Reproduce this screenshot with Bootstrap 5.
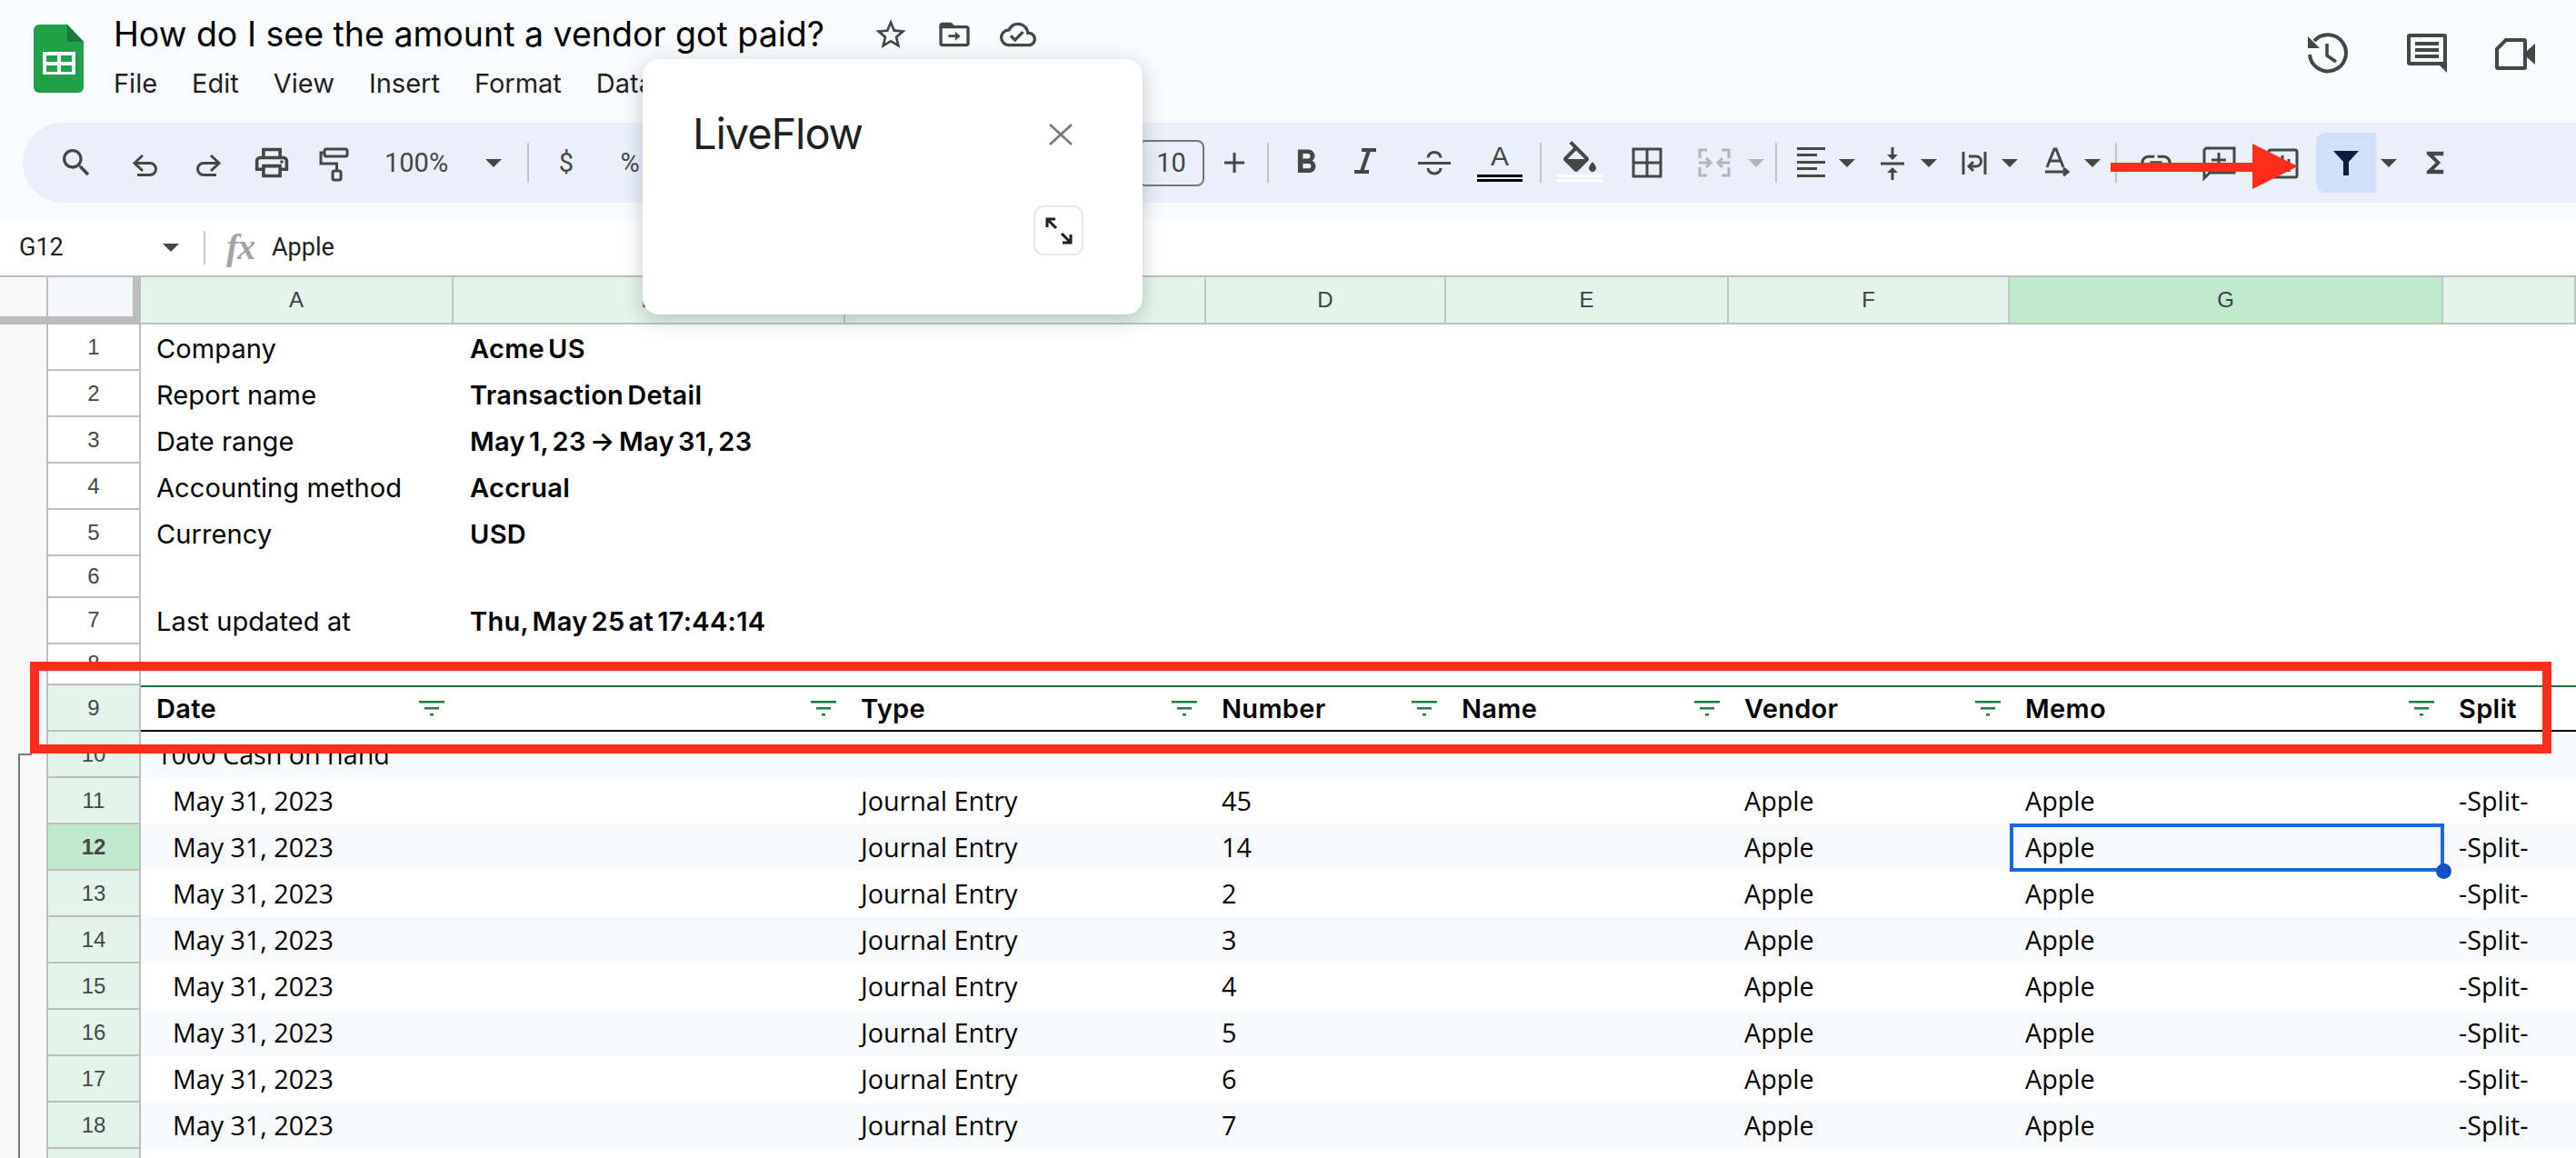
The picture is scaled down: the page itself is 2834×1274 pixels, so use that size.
<!DOCTYPE html>
<html lang="en">
<head>
<meta charset="utf-8">
<title>How do I see the amount a vendor got paid?</title>
<link rel="stylesheet" href="https://cdn.jsdelivr.net/npm/bootstrap@5.3.0/dist/css/bootstrap.min.css">
<style>
html,body{margin:0;background:#fff;}
.app{width:2834px;height:1274px;overflow:hidden;position:relative;font-family:"Liberation Sans",sans-serif;color:#000;}
svg{display:block;overflow:visible;flex:none;}
.topzone{height:241px;background:#f9fbfd;}
.titlebar{height:135px;}
.logo{margin:27px 0 0 37px;width:55px;height:75px;}
.titlecol{margin-left:33px;}
.titlerow{height:76px;}
.doc-title{font-family:Inter,sans-serif;font-size:37.5px;line-height:76px;width:835px;white-space:nowrap;color:#000;}
.menurow{height:32px;gap:38px;font-family:Inter,sans-serif;font-size:29px;line-height:32px;color:#1f1f1f;}
.righticons{position:relative;margin-left:auto;width:295px;padding-top:36px;}
.ttl-ic{width:40px;height:40px;}
.ric{width:44px;height:44px;}
.ric-2{margin-left:65px;}
.ric-3{margin-left:53px;}
.ttl-gap{margin-left:30px;}
.toolbar{height:88px;margin-left:25px;background:#e9f0fa;border-radius:44px 0 0 44px;color:#444746;}
.tic{width:40px;height:40px;flex:none;}
.tdr{width:18px;height:9px;flex:none;}
.tsp{width:2px;height:44px;background:#c0c3c7;flex:none;}
.tzoom{width:78px;font-family:Roboto,sans-serif;font-size:29px;text-align:left;flex:none;line-height:40px;}
.tchar{font-family:Roboto,sans-serif;font-size:29px;text-align:center;line-height:40px;}
.tsize{width:73px;height:51px;border:2px solid #747775;border-radius:8px;font-family:Roboto,sans-serif;font-size:29px;line-height:47px;text-align:center;flex:none;}
.tcolor{position:relative;}
.tletter{font-family:"Liberation Sans",sans-serif;font-size:30px;line-height:30px;text-align:center;color:#444746;margin-top:-2px;}
.bars{position:absolute;left:-5px;top:33px;width:50px;height:8px;border-top:3px solid #000;border-bottom:3px solid #000;}
.bars-w{border-color:#fff;}
.fillic{margin-top:-4px;}
.tfilter{width:66px;height:66px;background:#d0e0fb;border-radius:10px 0 0 10px;flex:none;}
.g5{margin-left:5px}.g10{margin-left:10px}.g11{margin-left:11px}.g12{margin-left:12px}.g13{margin-left:13px}.g16{margin-left:16px}.g17{margin-left:17px}.g21{margin-left:21px}.g22{margin-left:22px}.g23{margin-left:23px}.g24{margin-left:24px}.g25{margin-left:25px}.g28{margin-left:28px}.g29{margin-left:29px}.g30{margin-left:30px}.g32{margin-left:32px}.g33{margin-left:33px}.g34{margin-left:34px}.g36{margin-left:36px}.g39{margin-left:39px}.g539{margin-left:539px}
.formula{height:62px;background:#fff;font-family:Roboto,sans-serif;font-size:27px;color:#1f1f1f;}
.fname{width:158px;margin-left:21px;}
.fcaret{width:18px;height:9px;}
.fsep{width:2px;height:37px;background:#c7c7c7;margin-left:27px;}
.fxmark{font-family:"Liberation Serif",serif;font-style:italic;font-weight:700;font-size:40px;color:#a3a3a3;width:50px;margin-left:23px;letter-spacing:-1px;line-height:40px;}
.sheet-head,.sheet-row{display:grid;grid-template-columns:53px 102px 344px 431px 397px 264px 311px 309px 477px 1fr;}
.sheet-head{height:54px;border-top:2px solid #bdbdbd;}
.corner1{background:#f8f8f8;border-bottom:9px solid #bdbdbd;border-right:2px solid #bdbdbd;}
.corner2{background:#f5f6fa;border-bottom:9px solid #bdbdbd;border-right:9px solid #bdbdbd;}
.colh{background:#e3f5ea;border-right:2px solid #c0c7c2;border-bottom:2px solid #bdc4bf;font-size:24px;color:#3c4043;display:flex;align-items:center;justify-content:center;}
.colh-on{background:#bfebcd;}
.sheet-row{height:51px;}
.short{height:45.5px;}
.gut{background:#f8f8f8;border-right:2px solid #bdbdbd;position:relative;}
.rowh{border-right:2px solid #bdbdbd;border-bottom:2px solid #bdbdbd;font-size:24px;color:#444746;display:flex;align-items:center;justify-content:center;background:#fff;}
.rowh-g{background:#e3f5ea;}
.rowh-on{background:#bfebcd;font-weight:700;}
.zebra{background:#f8f9fa;}
.cellx{display:flex;align-items:center;white-space:nowrap;padding-left:18px;min-width:0;position:relative;}
.meta{font-family:Inter,sans-serif;font-size:29px;letter-spacing:.1px;color:#000;padding-left:17px;padding-top:2px;}
.metab{font-weight:600;padding-left:18px;letter-spacing:.3px;word-spacing:-3.5px;}
.data{font-family:"Open Sans",sans-serif;font-size:28.7px;color:#000;padding-left:17px;padding-bottom:1px;}
.indent{padding-left:35px;}
.hdr-row{background:#fff;}
.hdrc{font-family:Inter,sans-serif;font-weight:600;font-size:29px;letter-spacing:.3px;border-top:2px solid #1e6b3a;border-bottom:2px solid #000;justify-content:space-between;padding-left:17px;padding-right:10px;}
.fl{width:28px;height:18px;}
.gbrack{position:absolute;left:20px;top:0;width:15px;bottom:0;border-left:2px solid #777;}
.gbrack-t{border-top:2px solid #777;top:24px;}
.selbox{position:absolute;left:0;top:-1px;right:-1px;bottom:-1px;border:4px solid #1a66dc;pointer-events:none;}
.handle{position:absolute;right:-12px;bottom:-12px;width:17px;height:17px;border-radius:50%;background:#1250c4;}
.pop{position:absolute;left:707px;top:65px;width:550px;height:281px;border:0;border-radius:18px;box-shadow:0 6px 22px rgba(60,64,67,.28);background:#fff;}
.pop-title{position:absolute;left:55px;top:52px;font-family:Inter,sans-serif;font-size:47px;line-height:60px;color:#1f1f1f;letter-spacing:-1.1px;}
.pop-x{position:absolute;left:447px;top:71px;}
.pop-exp{position:absolute;left:430px;top:161px;width:55px;height:55px;border:2px solid #e6e6ee;border-radius:11px;padding:0;background:#fff;display:flex;align-items:center;justify-content:center;}
.redbox{position:absolute;left:33px;top:728px;width:2774px;height:101px;border:10px solid #ff2d1a;}
.redarrow{position:absolute;left:2322px;top:158px;}
</style>
</head>
<body>
<div class="app">
  <div class="topzone">
    <div class="titlebar d-flex">
      <svg class="logo" viewBox="0 0 55 75"><path d="M6 0H37L55 19V69a6 6 0 0 1-6 6H6a6 6 0 0 1-6-6V6a6 6 0 0 1 6-6z" fill="#1fa14a"/><path d="M37 0L55 19H37z" fill="#187a38"/><path d="M10 30H46V55H10z" fill="#fff"/><path d="M14 34H26V41H14zM30 34H42V41H30zM14 45H26V52H14zM30 45H42V52H30z" fill="#1fa14a"/></svg>
      <div class="titlecol">
        <div class="titlerow d-flex align-items-center">
          <div class="doc-title">How do I see the amount a vendor got paid?</div>
          <svg class="ttl-ic" viewBox="0 0 24 24" fill="#444746"><path d="M22 9.24l-7.19-.62L12 2 9.19 8.63 2 9.24l5.46 4.73L5.82 21 12 17.27 18.18 21l-1.63-7.03L22 9.24zM12 15.4l-3.76 2.27 1-4.28-3.32-2.88 4.38-.38L12 6.1l1.71 4.04 4.38.38-3.32 2.88 1 4.28L12 15.4z"/></svg>
          <svg class="ttl-ic ttl-gap" viewBox="0 0 24 24" fill="#444746"><path d="M20 6h-8l-2-2H4c-1.1 0-2 .9-2 2v12c0 1.100.9 2 2 2h16c1.100 0 2-.9 2-2V8c0-1.100-.9-2-2-2zm0 12H4V8h16v10z"/><path d="M8 12.200h4.500V10l3.500 3-3.500 3v-2.200H8z"/></svg>
          <svg class="ttl-ic ttl-gap" viewBox="0 0 24 24" fill="#444746"><path d="M19.350 10.040C18.670 6.590 15.640 4 12 4 9.110 4 6.600 5.640 5.350 8.040 2.340 8.360 0 10.910 0 14c0 3.310 2.690 6 6 6h13c2.760 0 5-2.240 5-5 0-2.640-2.050-4.780-4.650-4.960zM19 18H6c-2.210 0-4-1.790-4-4 0-2.050 1.530-3.760 3.560-3.970l1.070-.11.5-.95C8.080 7.140 9.940 6 12 6c2.620 0 4.880 1.860 5.390 4.430l.3 1.500 1.530.11c1.560.1 2.780 1.410 2.780 2.960 0 1.650-1.350 3-3 3zm-9-3.820l-2.090-2.090L6.500 13.500 10 17l6.010-6.010-1.410-1.410z"/></svg>
        </div>
        <div class="menurow d-flex">
          <span>File</span><span>Edit</span><span>View</span><span>Insert</span><span>Format</span><span>Data</span>
        </div>
      </div>
      <div class="righticons d-flex align-items-start">
        <svg class="ric" viewBox="0 0 44 44" fill="none" stroke="#444746" stroke-width="4"><path d="M7 9A20 20 0 1 1 2 24"/><path d="M21 12V25L31 32" stroke-width="3.500"/><path d="M0 4V17H13z" fill="#444746" stroke="none"/></svg>
        <svg class="ric ric-2" viewBox="0 0 44 44" fill="#444746"><path d="M3 1H41a3 3 0 0 1 3 3V44L36 36H3a3 3 0 0 1-3-3V4a3 3 0 0 1 3-3zM4 5V32H40V5z" fill-rule="evenodd"/><path d="M9 10H35V14H9zM9 17H35V21H9zM9 24H35V28H9z"/></svg>
        <svg class="ric ric-3" viewBox="0 0 44 44" fill="#444746"><path d="M11 6H32a3 3 0 0 1 3 3V38a3 3 0 0 1-3 3H3a3 3 0 0 1-3-3V17zM12.700 10L4 18.700V37H31V10z" fill-rule="evenodd"/><path d="M35 20L44 12V35L35 27z"/></svg>
      </div>
    </div>
    <div class="toolbar d-flex align-items-center">
      <svg class="tic g39" viewBox="0 0 24 24" fill="#444746"><path d="M15.500 14h-.79l-.28-.27C15.410 12.590 16 11.110 16 9.500 16 5.910 13.090 3 9.500 3S3 5.910 3 9.500 5.910 16 9.500 16c1.610 0 3.090-.59 4.230-1.570l.27.28v.79l5 4.990L20.490 19l-4.990-5zm-6 0C7.010 14 5 11.990 5 9.500S7.010 5 9.500 5 14 7.010 14 9.500 11.990 14 9.500 14z"/></svg>
      <svg class="tic g36" viewBox="0 0 40 40" fill="none" stroke="#444746" stroke-width="3"><path d="M17 12L8 20.500L17 29M8 20.500H25a6.500 6.500 0 0 1 0 13H11"/></svg>
      <svg class="tic g29" viewBox="0 0 40 40" fill="none" stroke="#444746" stroke-width="3"><path d="M23 12L32 20.500L23 29M32 20.500H15a6.500 6.500 0 0 0 0 13H29"/></svg>
      <svg class="tic g30" viewBox="1 1 22 22" fill="#444746"><path d="M19 8h-1V3H6v5H5c-1.660 0-3 1.340-3 3v6h4v4h12v-4h4v-6c0-1.660-1.340-3-3-3zM8 5h8v3H8V5zm8 12v2H8v-4h8v2zm2-2v-2H6v2H4v-4c0-.55.45-1 1-1h14c.55 0 1 .45 1 1v4h-2z"/><circle cx="18" cy="11.500" r="1"/></svg>
      <svg class="tic g28" viewBox="0 0 40 40" fill="none" stroke="#444746" stroke-width="3"><rect x="10" y="5" width="25" height="8" rx="2"/><path d="M10 9H6V21H23.500V29"/><rect x="19" y="29" width="9" height="10" rx="2"/></svg>
      <div class="tzoom g36">100%</div>
      <svg class="tdr g33" viewBox="0 0 18 9" fill="#444746"><path d="M0 0H18L9 9z"/></svg>
      <div class="tsp g28"></div>
      <div class="tic tchar g21">$</div>
      <div class="tic tchar g30">%</div>
      <div class="tsize g539">10</div>
      <svg class="tic g13" viewBox="0 0 40 40" fill="#444746"><path d="M9 18.500H31V21.500H9zM18.500 9H21.500V31H18.500z"/></svg>
      <div class="tsp g16"></div>
      <svg class="tic g21" viewBox="1 1 22 22" fill="#444746"><path d="M15.600 10.790c.97-.67 1.650-1.770 1.650-2.790 0-2.260-1.750-4-4-4H7v14h7.040c2.090 0 3.710-1.700 3.710-3.790 0-1.520-.86-2.820-2.150-3.420zM10 6.500h3c.83 0 1.500.67 1.500 1.500s-.67 1.500-1.500 1.500h-3v-3zm3.500 9H10v-3h3.500c.83 0 1.500.67 1.500 1.500s-.67 1.500-1.500 1.500z"/></svg>
      <svg class="tic g25" viewBox="2 2 20 20" fill="#444746"><path d="M10 4v2h2.600L9.200 16H6v2h8v-2h-2.600l3.400-10H18V4z"/></svg>
      <svg class="tic g36" viewBox="0 0 40 40" fill="none" stroke="#444746" stroke-width="3"><path d="M2 20.500H38"/><path d="M13 14.500a7 6 0 0 1 14 0M13 26a7 6 0 0 0 14 0"/></svg>
      <div class="tic g32 tcolor"><div class="tletter">A</div><div class="bars"></div></div>
      <div class="tsp g24"></div>
      <div class="tic g22 tcolor">
        <svg class="fillic" width="40" height="36" viewBox="2 0 20 18" fill="#444746"><path d="M16.560 8.940L7.620 0 6.210 1.410l2.380 2.380-5.150 5.150c-.59.59-.59 1.540 0 2.120l5.500 5.500c.29.29.68.44 1.060.44s.77-.15 1.060-.44l5.500-5.500c.59-.58.59-1.530 0-2.120zM5.210 10L10 5.210 14.790 10H5.210zM19 11.500s-2 2.170-2 3.500c0 1.100.9 2 2 2s2-.9 2-2c0-1.330-2-3.500-2-3.500z"/></svg>
        <div class="bars bars-w"></div>
      </div>
      <svg class="tic g34" viewBox="0 0 40 40" fill="none" stroke="#444746" stroke-width="3"><rect x="5" y="5" width="30" height="30"/><path d="M20 5V35M5 20H35"/></svg>
      <svg class="tic g34" viewBox="0 0 40 40" fill="none" stroke="#b1b4b8" stroke-width="3"><path d="M12 6H4V15M4 25V34H12M28 6H36V15M36 25V34H28"/><path d="M3 20H16M11 15L16 20L11 25M37 20H24M29 15L24 20L29 25"/></svg>
      <svg class="tdr g17" viewBox="0 0 18 9" fill="#b1b4b8"><path d="M0 0H18L9 9z"/></svg>
      <div class="tsp g12"></div>
      <svg class="tic g17" viewBox="0 0 40 40" fill="#444746"><path d="M5 3H36V6H5zM5 10H27V13H5zM5 18H36V21H5zM5 25H27V28H5zM5 33H36V36H5z"/></svg>
      <svg class="tdr g11" viewBox="0 0 18 9" fill="#444746"><path d="M0 0H18L9 9z"/></svg>
      <svg class="tic g21" viewBox="0 0 40 40" fill="#444746"><path d="M7 19.500H33V22.500H7z"/><path d="M18.500 3H21.500V11H26L20 17L14 11H18.500zM18.500 39H21.500V31H26L20 25L14 31H18.500z"/></svg>
      <svg class="tdr g11" viewBox="0 0 18 9" fill="#444746"><path d="M0 0H18L9 9z"/></svg>
      <svg class="tic g21" viewBox="0 0 40 40" fill="none" stroke="#444746" stroke-width="3"><path d="M8 8V33M32 8V33M14 13H22a5 5 0 0 1 0 11H15"/><path d="M19 19L14 24L19 29"/></svg>
      <svg class="tdr g10" viewBox="0 0 18 9" fill="#444746"><path d="M0 0H18L9 9z"/></svg>
      <svg class="tic g22" viewBox="0 0 40 40" fill="none" stroke="#444746" stroke-width="3"><path d="M10 25L18 5H20L28 25M13 18H25M8 30H32M28 26L33 30L28 34"/></svg>
      <svg class="tdr g11" viewBox="0 0 18 9" fill="#444746"><path d="M0 0H18L9 9z"/></svg>
      <div class="tsp g16"></div>
      <svg class="tic g23" viewBox="0 0 24 24" fill="#444746"><path d="M3.900 12c0-1.710 1.390-3.100 3.100-3.100h4V7H7c-2.760 0-5 2.240-5 5s2.240 5 5 5h4v-1.900H7c-1.710 0-3.100-1.390-3.100-3.100zM8 13h8v-2H8v2zm9-6h-4v1.900h4c1.710 0 3.100 1.390 3.100 3.100s-1.390 3.100-3.100 3.100h-4V17h4c2.760 0 5-2.240 5-5s-2.240-5-5-5z"/></svg>
      <svg class="tic g29" viewBox="0 0 40 40" fill="none" stroke="#444746" stroke-width="3"><path d="M6 4H37V31H10L4 37V6z"/><path d="M12 17H28M20 9V25" /></svg>
      <svg class="tic g30" viewBox="0 0 40 40" fill="none" stroke="#444746" stroke-width="3"><rect x="5" y="6" width="31" height="30" rx="2"/><path d="M20 12V30M13 20V30M27 16V30"/></svg>
      <div class="tfilter g17 d-flex align-items-center justify-content-center">
        <svg width="28" height="27" viewBox="0 0 28 27" fill="#0b1d42"><path d="M0 0H28L17 12V27H11V12z"/></svg>
      </div>
      <svg class="tdr g5" viewBox="0 0 18 9" fill="#444746"><path d="M0 0H18L9 9z"/></svg>
      <svg class="tic g22" viewBox="-1 -1 26 26" fill="#444746"><path d="M18 4H6v2l6.500 6L6 18v2h12v-3h-7l5-5-5-5h7z"/></svg>
    </div>
  </div>
  <div class="formula d-flex align-items-center">
    <div class="fname">G12</div>
    <svg class="fcaret" viewBox="0 0 18 9" fill="#444746"><path d="M0 0H18L9 9z"/></svg>
    <div class="fsep"></div>
    <div class="fxmark">fx</div>
    <div>Apple</div>
  </div>
  <div class="sheet-head">
    <div class="corner1"></div><div class="corner2"></div>
    <div class="colh">A</div><div class="colh">B</div><div class="colh">C</div><div class="colh">D</div><div class="colh">E</div><div class="colh">F</div><div class="colh colh-on">G</div><div class="colh"></div>
  </div>

  <div class="sheet-row"><div class="gut"></div><div class="rowh">1</div><div class="cellx meta">Company</div><div class="cellx meta metab">Acme US</div></div>
  <div class="sheet-row"><div class="gut"></div><div class="rowh">2</div><div class="cellx meta">Report name</div><div class="cellx meta metab">Transaction Detail</div></div>
  <div class="sheet-row"><div class="gut"></div><div class="rowh">3</div><div class="cellx meta">Date range</div><div class="cellx meta metab">May 1, 23 → May 31, 23</div></div>
  <div class="sheet-row"><div class="gut"></div><div class="rowh">4</div><div class="cellx meta">Accounting method</div><div class="cellx meta metab">Accrual</div></div>
  <div class="sheet-row"><div class="gut"></div><div class="rowh">5</div><div class="cellx meta">Currency</div><div class="cellx meta metab">USD</div></div>
  <div class="sheet-row short"><div class="gut"></div><div class="rowh">6</div></div>
  <div class="sheet-row"><div class="gut"></div><div class="rowh">7</div><div class="cellx meta">Last updated at</div><div class="cellx meta metab">Thu, May 25 at 17:44:14</div></div>
  <div class="sheet-row short"><div class="gut"></div><div class="rowh">8</div></div>

  <div class="sheet-row hdr-row"><div class="gut"></div><div class="rowh rowh-g">9</div>
    <div class="cellx hdrc">Date<svg class="fl" viewBox="0 0 28 18" fill="#1e7e3c"><path d="M0 0H28V2.500H0zM6 7H22V9.500H6zM12 14H16V16.500H12z"/></svg></div>
    <div class="cellx hdrc"><span></span><svg class="fl" viewBox="0 0 28 18" fill="#1e7e3c"><path d="M0 0H28V2.500H0zM6 7H22V9.500H6zM12 14H16V16.500H12z"/></svg></div>
    <div class="cellx hdrc">Type<svg class="fl" viewBox="0 0 28 18" fill="#1e7e3c"><path d="M0 0H28V2.500H0zM6 7H22V9.500H6zM12 14H16V16.500H12z"/></svg></div>
    <div class="cellx hdrc">Number<svg class="fl" viewBox="0 0 28 18" fill="#1e7e3c"><path d="M0 0H28V2.500H0zM6 7H22V9.500H6zM12 14H16V16.500H12z"/></svg></div>
    <div class="cellx hdrc">Name<svg class="fl" viewBox="0 0 28 18" fill="#1e7e3c"><path d="M0 0H28V2.500H0zM6 7H22V9.500H6zM12 14H16V16.500H12z"/></svg></div>
    <div class="cellx hdrc">Vendor<svg class="fl" viewBox="0 0 28 18" fill="#1e7e3c"><path d="M0 0H28V2.500H0zM6 7H22V9.500H6zM12 14H16V16.500H12z"/></svg></div>
    <div class="cellx hdrc">Memo<svg class="fl" viewBox="0 0 28 18" fill="#1e7e3c"><path d="M0 0H28V2.500H0zM6 7H22V9.500H6zM12 14H16V16.500H12z"/></svg></div>
    <div class="cellx hdrc">Split</div>
  </div>

  <div class="sheet-row zebra"><div class="gut"><div class="gbrack gbrack-t"></div></div><div class="rowh rowh-g">10</div><div class="cellx data">1000 Cash on hand</div></div>
  <div class="sheet-row"><div class="gut"><div class="gbrack"></div></div><div class="rowh rowh-g">11</div><div class="cellx data indent">May 31, 2023</div><div class="cellx"></div><div class="cellx data">Journal Entry</div><div class="cellx data">45</div><div class="cellx"></div><div class="cellx data">Apple</div><div class="cellx data">Apple</div><div class="cellx data">-Split-</div></div>
  <div class="sheet-row zebra"><div class="gut"><div class="gbrack"></div></div><div class="rowh rowh-on">12</div><div class="cellx data indent">May 31, 2023</div><div class="cellx"></div><div class="cellx data">Journal Entry</div><div class="cellx data">14</div><div class="cellx"></div><div class="cellx data">Apple</div><div class="cellx data">Apple<div class="selbox"><div class="handle"></div></div></div><div class="cellx data">-Split-</div></div>
  <div class="sheet-row"><div class="gut"><div class="gbrack"></div></div><div class="rowh rowh-g">13</div><div class="cellx data indent">May 31, 2023</div><div class="cellx"></div><div class="cellx data">Journal Entry</div><div class="cellx data">2</div><div class="cellx"></div><div class="cellx data">Apple</div><div class="cellx data">Apple</div><div class="cellx data">-Split-</div></div>
  <div class="sheet-row zebra"><div class="gut"><div class="gbrack"></div></div><div class="rowh rowh-g">14</div><div class="cellx data indent">May 31, 2023</div><div class="cellx"></div><div class="cellx data">Journal Entry</div><div class="cellx data">3</div><div class="cellx"></div><div class="cellx data">Apple</div><div class="cellx data">Apple</div><div class="cellx data">-Split-</div></div>
  <div class="sheet-row"><div class="gut"><div class="gbrack"></div></div><div class="rowh rowh-g">15</div><div class="cellx data indent">May 31, 2023</div><div class="cellx"></div><div class="cellx data">Journal Entry</div><div class="cellx data">4</div><div class="cellx"></div><div class="cellx data">Apple</div><div class="cellx data">Apple</div><div class="cellx data">-Split-</div></div>
  <div class="sheet-row zebra"><div class="gut"><div class="gbrack"></div></div><div class="rowh rowh-g">16</div><div class="cellx data indent">May 31, 2023</div><div class="cellx"></div><div class="cellx data">Journal Entry</div><div class="cellx data">5</div><div class="cellx"></div><div class="cellx data">Apple</div><div class="cellx data">Apple</div><div class="cellx data">-Split-</div></div>
  <div class="sheet-row"><div class="gut"><div class="gbrack"></div></div><div class="rowh rowh-g">17</div><div class="cellx data indent">May 31, 2023</div><div class="cellx"></div><div class="cellx data">Journal Entry</div><div class="cellx data">6</div><div class="cellx"></div><div class="cellx data">Apple</div><div class="cellx data">Apple</div><div class="cellx data">-Split-</div></div>
  <div class="sheet-row zebra"><div class="gut"><div class="gbrack"></div></div><div class="rowh rowh-g">18</div><div class="cellx data indent">May 31, 2023</div><div class="cellx"></div><div class="cellx data">Journal Entry</div><div class="cellx data">7</div><div class="cellx"></div><div class="cellx data">Apple</div><div class="cellx data">Apple</div><div class="cellx data">-Split-</div></div>
  <div class="sheet-row"><div class="gut"><div class="gbrack"></div></div><div class="rowh rowh-g"></div></div>

  <div class="pop card">
    <div class="pop-title">LiveFlow</div>
    <svg class="pop-x" width="26" height="24" viewBox="0 0 26 24" fill="none" stroke="#757575" stroke-width="2.500"><path d="M1 1L25 23M25 1L1 23"/></svg>
    <button type="button" class="btn pop-exp"><svg width="32" height="32" viewBox="0 0 32 32" fill="none" stroke="#1f1f1f" stroke-width="3"><path d="M3 3L13 13M19 19L29 29M3 12V3H12M29 20V29H20"/></svg></button>
  </div>
  <div class="redbox"></div>
  <svg class="redarrow" width="206" height="50" viewBox="0 0 206 50" fill="#ff2d1a"><path d="M0 21H156V0L206 25L156 50V31H0z"/></svg>
</div>
<script src="https://cdn.jsdelivr.net/npm/bootstrap@5.3.0/dist/js/bootstrap.bundle.min.js"></script>
</body>
</html>
